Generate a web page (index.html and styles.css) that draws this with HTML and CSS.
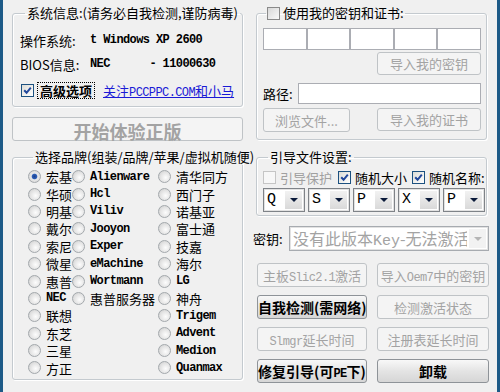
FILE: index.html
```html
<!DOCTYPE html>
<html lang="zh-CN">

<head>
    <meta charset="UTF-8">
    <meta name="viewport" content="width=device-width, initial-scale=1.0">
    <title>激活工具</title>
    <link rel="stylesheet" href="styles.css">
</head>

<body>
    <div class="window">
        <!-- 左侧 -->
        <div class="col">
            <fieldset class="group sys-group">
                <legend>系统信息:(请务必自我检测,谨防病毒)</legend>
                <div class="info-row"><span class="label">操作系统:</span><span class="en">t Windows XP 2600</span></div>
                <div class="info-row"><span class="label">BIOS信息:</span><span class="en">NEC&nbsp;&nbsp;&nbsp;&nbsp;&nbsp;&nbsp;- 11000630</span></div>
                <div class="adv-row">
                    <span class="cb on"><svg viewBox="0 0 11 11"><path d="M2.2 5.2 L4.6 7.8 L8.8 2.6" /></svg></span>
                    <span class="focus">高级选项</span>
                    <a class="link" href="#">关注<span class="en">PCCPPC.COM</span>和小马</a>
                </div>
            </fieldset>

            <button class="btn big" disabled>开始体验正版</button>

            <fieldset class="group brand-group">
                <legend>选择品牌(组装/品牌/苹果/虚拟机随便)</legend>
                <div class="radio-grid">
                    <label class="radio on"><i></i>宏基</label>
                    <label class="radio"><i></i><span class="en">Alienware</span></label>
                    <label class="radio"><i></i>清华同方</label>

                    <label class="radio"><i></i>华硕</label>
                    <label class="radio"><i></i><span class="en">Hcl</span></label>
                    <label class="radio"><i></i>西门子</label>

                    <label class="radio"><i></i>明基</label>
                    <label class="radio"><i></i><span class="en">Viliv</span></label>
                    <label class="radio"><i></i>诺基亚</label>

                    <label class="radio"><i></i>戴尔</label>
                    <label class="radio"><i></i><span class="en">Jooyon</span></label>
                    <label class="radio"><i></i>富士通</label>

                    <label class="radio"><i></i>索尼</label>
                    <label class="radio"><i></i><span class="en">Exper</span></label>
                    <label class="radio"><i></i>技嘉</label>

                    <label class="radio"><i></i>微星</label>
                    <label class="radio"><i></i><span class="en">eMachine</span></label>
                    <label class="radio"><i></i>海尔</label>

                    <label class="radio"><i></i>惠普</label>
                    <label class="radio"><i></i><span class="en">Wortmann</span></label>
                    <label class="radio"><i></i><span class="en">LG</span></label>

                    <label class="radio"><i></i><span class="en">NEC</span></label>
                    <label class="radio"><i></i>惠普服务器</label>
                    <label class="radio"><i></i>神舟</label>

                    <label class="radio"><i></i>联想</label>
                    <span></span>
                    <label class="radio"><i></i><span class="en">Trigem</span></label>

                    <label class="radio"><i></i>东芝</label>
                    <span></span>
                    <label class="radio"><i></i><span class="en">Advent</span></label>

                    <label class="radio"><i></i>三星</label>
                    <span></span>
                    <label class="radio"><i></i><span class="en">Medion</span></label>

                    <label class="radio"><i></i>方正</label>
                    <span></span>
                    <label class="radio"><i></i><span class="en">Quanmax</span></label>
                </div>
            </fieldset>
        </div>

        <!-- 右侧 -->
        <div class="col">
            <fieldset class="group key-group">
                <legend><span class="cb"></span>使用我的密钥和证书:</legend>
                <div class="key-boxes">
                    <span></span><span></span><span></span><span></span><span></span>
                </div>
                <div class="import-row">
                    <button class="btn import-btn" disabled>导入我的密钥</button>
                </div>
                <div class="path-row">
                    <span>路径:</span>
                    <span class="path-input"></span>
                </div>
                <div class="file-row">
                    <button class="btn browse-btn" disabled>浏览文件...</button>
                    <button class="btn import-btn" disabled>导入我的证书</button>
                </div>
            </fieldset>

            <fieldset class="group boot-group">
                <legend>引导文件设置:</legend>
                <div class="opt-row">
                    <span class="opt off"><span class="cb dis"></span>引导保护</span>
                    <span class="opt"><span class="cb on"><svg viewBox="0 0 11 11"><path d="M2.2 5.2 L4.6 7.8 L8.8 2.6" /></svg></span>随机大小</span>
                    <span class="opt"><span class="cb on"><svg viewBox="0 0 11 11"><path d="M2.2 5.2 L4.6 7.8 L8.8 2.6" /></svg></span>随机名称:</span>
                </div>
                <div class="combo-row">
                    <div class="combo"><span class="val">Q</span><span class="arrow"></span></div>
                    <div class="combo"><span class="val">S</span><span class="arrow"></span></div>
                    <div class="combo"><span class="val">P</span><span class="arrow"></span></div>
                    <div class="combo"><span class="val">X</span><span class="arrow"></span></div>
                    <div class="combo"><span class="val">P</span><span class="arrow"></span></div>
                </div>
            </fieldset>

            <div class="key-row">
                <span class="key-label">密钥:</span>
                <div class="combo key-combo dis">
                    <span class="val">没有此版本<span class="en">Key</span>-无法激活</span>
                    <span class="arrow"></span>
                </div>
            </div>

            <div class="actions">
                <button class="btn" disabled>主板<span class="en">Slic2.1</span>激活</button>
                <button class="btn" disabled>导入<span class="en">Oem7</span>中的密钥</button>
                <button class="btn strong">自我检测(需网络)</button>
                <button class="btn" disabled>检测激活状态</button>
                <button class="btn" disabled><span class="en">Slmgr</span>延长时间</button>
                <button class="btn" disabled>注册表延长时间</button>
                <button class="btn strong">修复引导(可<span class="en">PE</span>下)</button>
                <button class="btn strong">卸载</button>
            </div>
        </div>
    </div>
</body>

</html>
```

FILE: styles.css
```css
body {
    margin: 0;
    background: #f0f0f0;
    font-family: "Noto Sans CJK SC", sans-serif;
    font-size: 13px;
    color: #000;
}

.window {
    width: 500px;
    height: 392px;
    box-sizing: border-box;
    border-left: 3px solid #1d5a87;
    border-right: 3px solid #1d5a87;
    background: #f0f0f0;
    display: grid;
    grid-template-columns: 231px 236px;
    column-gap: 10px;
    padding: 5px 8px 0 9px;
    align-items: start;
    overflow: hidden;
}

.col {
    display: flex;
    flex-direction: column;
}

.en {
    font-family: "Liberation Mono", monospace;
    font-size: 12px;
    letter-spacing: -0.6px;
    font-weight: bold;
}

/* 分组框 */
.group {
    margin: 0;
    min-width: 0;
    border: 1px solid #c4cacf;
    border-radius: 3px;
    box-shadow: inset 1px 1px 0 #fff, 1px 1px 0 #fff;
}

.group legend {
    padding: 0 2px;
    margin-left: 5px;
    line-height: 16px;
    white-space: nowrap;
}

.sys-group {
    padding: 7px 6px 4px 7px;
}

.info-row {
    height: 24px;
    display: flex;
    align-items: center;
}

.info-row .label {
    width: 70px;
}

.adv-row {
    height: 24px;
    margin-top: 2px;
    display: flex;
    align-items: center;
}

.adv-row .cb {
    margin-left: 1px;
}

.focus {
    margin-left: 3px;
    padding: 0 2px;
    border: 1px dotted #000;
    font-weight: bold;
    line-height: 15px;
}

.link {
    margin-left: 8px;
    color: #1a1ad6;
    text-decoration: underline;
    white-space: nowrap;
}

.link .en {
    font-weight: normal;
}

/* 复选框、单选框 */
.cb {
    width: 11px;
    height: 11px;
    border: 1px solid #1c5180;
    background: linear-gradient(135deg, #dcdcd7, #fff);
    display: inline-flex;
    align-items: center;
    justify-content: center;
    flex-shrink: 0;
}

.cb svg {
    width: 11px;
    height: 11px;
}

.cb svg path {
    fill: none;
    stroke: #21479b;
    stroke-width: 2;
}

.cb.dis {
    border-color: #c5c5c5;
    background: #f7f7f7;
}

.key-group .cb {
    border-color: #8a8a8a;
    background: linear-gradient(135deg, #d8d8d8, #fafafa);
}

.radio {
    display: flex;
    align-items: center;
    gap: 5px;
    white-space: nowrap;
}

.radio i {
    width: 11px;
    height: 11px;
    border-radius: 50%;
    border: 1px solid #a3a8ac;
    background: radial-gradient(circle at 60% 60%, #fdfdfd 0, #e3e3e3 55%, #c9c9c9 100%);
    flex-shrink: 0;
}

.radio.on i {
    background: radial-gradient(circle, #1d3f8a 0, #2c5fb8 30%, #e8e8e8 42%, #cfcfcf 100%);
}

/* 按钮 */
.btn {
    height: 24px;
    padding: 0;
    font-family: inherit;
    font-size: 13px;
    color: #000;
    border: 1px solid #8e9398;
    border-radius: 3px;
    background: linear-gradient(#f8f8f8, #e4e4e4 50%, #d6d6d6);
    white-space: nowrap;
}

.btn:disabled {
    color: #a3a3a3;
    border-color: #bfc3c6;
    background: #f4f4f4;
}

.btn:disabled .en {
    font-weight: normal;
}

.btn.strong {
    font-weight: bold;
    font-size: 14px;
}

.big {
    margin-top: 10px;
    width: 231px;
    height: 24px;
    font-size: 18px;
    font-weight: bold;
}

.brand-group {
    margin-top: 8px;
    padding: 3px 0 2px 15px;
}

.radio-grid {
    display: grid;
    grid-template-columns: 44px 86px 1fr;
    grid-auto-rows: 17.4px;
}

/* 右侧 */
.key-group {
    margin-left: 3px;
    width: 231px;
    box-sizing: border-box;
    padding: 7px 5px 7px 6px;
}

.key-group legend {
    margin-left: 3px;
    padding: 0 1px;
    display: flex;
    align-items: center;
    gap: 3px;
}

.key-boxes {
    display: flex;
}

.key-boxes span {
    flex: 1;
    height: 22px;
    box-sizing: border-box;
    border: 1px solid #abadb3;
    background: #fff;
}

.import-row {
    display: flex;
    justify-content: flex-end;
    margin-top: 2px;
}

.import-btn {
    width: 104px;
    height: 23px;
}

.path-row {
    display: flex;
    align-items: center;
    margin-top: 8px;
    height: 21px;
}

.path-input {
    margin-left: auto;
    width: 183px;
    height: 21px;
    box-sizing: border-box;
    border: 1px solid #abadb3;
    background: #fff;
}

.file-row {
    display: flex;
    justify-content: space-between;
    margin-top: 4px;
}

.browse-btn {
    width: 87px;
}

.boot-group {
    margin-top: 9px;
    margin-left: 3px;
    width: 231px;
    box-sizing: border-box;
    padding: 3px 1px 3px 6px;
}

.opt-row {
    display: flex;
    align-items: center;
    height: 18px;
}

.opt {
    display: flex;
    align-items: center;
    gap: 4px;
    white-space: nowrap;
}

.opt:nth-child(1) {
    width: 75px;
}

.opt:nth-child(2) {
    width: 74px;
}

.opt.off {
    color: #a0a0a0;
}

.combo-row {
    display: flex;
    gap: 3px;
    margin-top: 2px;
}

.combo {
    flex: 1;
    height: 24px;
    box-sizing: border-box;
    border: 1px solid #7f8388;
    box-shadow: inset 0 0 0 1px #e2e2e2;
    background: #fff;
    display: flex;
    overflow: hidden;
}

.combo .val {
    flex: 1;
    min-width: 0;
    padding-left: 3px;
    font-family: "Liberation Mono", monospace;
    font-size: 15px;
    line-height: 22px;
    white-space: nowrap;
    overflow: hidden;
}

.combo .arrow {
    width: 17px;
    margin: 2px;
    background: linear-gradient(#f2f2f2, #d9d9d9);
    display: flex;
    align-items: center;
    justify-content: center;
    flex-shrink: 0;
}

.combo .arrow::after {
    content: "";
    border-left: 4px solid transparent;
    border-right: 4px solid transparent;
    border-top: 4px solid #0a1a3a;
}

.key-row {
    display: flex;
    align-items: center;
    margin-top: 10px;
}

.key-label {
    width: 36px;
}

.key-combo {
    flex: none;
    width: 200px;
    height: 25px;
    border-color: #a7abb0;
}

.key-combo .val {
    font-family: "Noto Sans CJK SC", sans-serif;
    font-size: 16px;
    color: #a3a3a3;
}

.key-combo .val .en {
    font-size: 15px;
    letter-spacing: 0;
    font-weight: normal;
}

.key-combo .arrow {
    background: #f2f2f2;
}

.key-combo .arrow::after {
    border-top-color: #b5b5b5;
}

.actions {
    margin-top: 12px;
    margin-left: 4px;
    display: grid;
    grid-template-columns: 110px 112px;
    column-gap: 10px;
    row-gap: 8px;
}
```
